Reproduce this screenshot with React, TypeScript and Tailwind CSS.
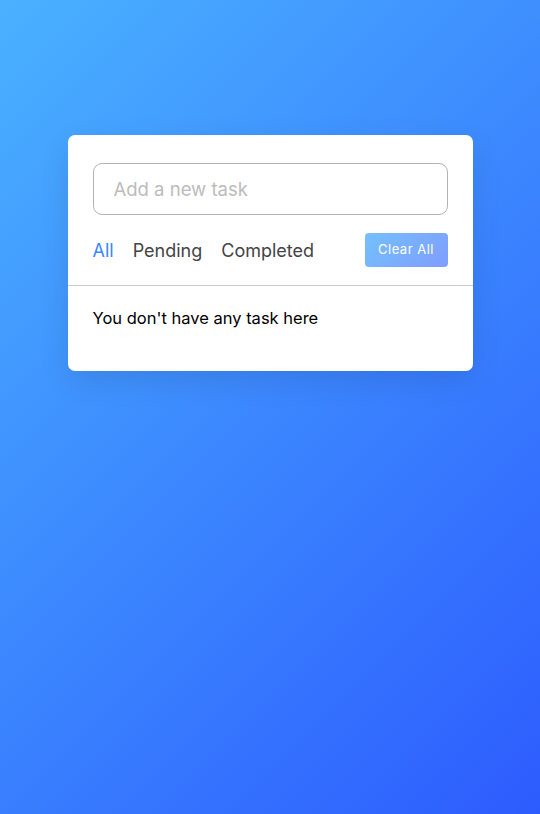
import { useState } from "react";

const filters = ["All", "Pending", "Completed"];

export default function App() {
    const [active, setActive] = useState("All");
    const [task, setTask] = useState("");

    return (
        <div
            className="min-h-[814px] w-full bg-[linear-gradient(135deg,#4ab1ff,#2d5cfe)] pt-[135px]"
            style={{ fontFamily: "Inter, 'Open Sans', sans-serif" }}
        >
            <div className="mx-auto w-[405px] rounded-[7px] bg-white pt-[28px] pb-[31px] shadow-[0_10px_30px_rgba(0,0,0,0.1)]">
                <div className="h-[52px] px-[25px]">
                    <input
                        value={task}
                        onChange={(e) => setTask(e.target.value)}
                        placeholder="Add a new task"
                        className="h-full w-full rounded-[9px] border border-[#b3b3b3] px-[20px] text-[18.5px] outline-none placeholder:text-[#bcbcbc]"
                    />
                </div>

                <div className="flex items-center justify-between border-b border-[#cccccc] px-[25px] py-[18px]">
                    <div className="flex gap-[19px]">
                        {filters.map((f) => (
                            <span
                                key={f}
                                onClick={() => setActive(f)}
                                className={`cursor-pointer text-[18px] ${active === f ? "text-[#3c87ff]" : "text-[#444444]"}`}
                            >
                                {f}
                            </span>
                        ))}
                    </div>
                    <button className="h-[34px] w-[83px] rounded-[4px] bg-[linear-gradient(135deg,#1798fb_0%,#2d5cfe_100%)] text-[13px] tracking-[0.5px] text-white opacity-60">
                        Clear All
                    </button>
                </div>

                <div className="mt-[20px] pr-[20px] pb-[10px] pl-[25px]">
                    <span className="text-[16.5px] leading-[24px] text-black">You don't have any task here</span>
                </div>
            </div>
        </div>
    );
}
